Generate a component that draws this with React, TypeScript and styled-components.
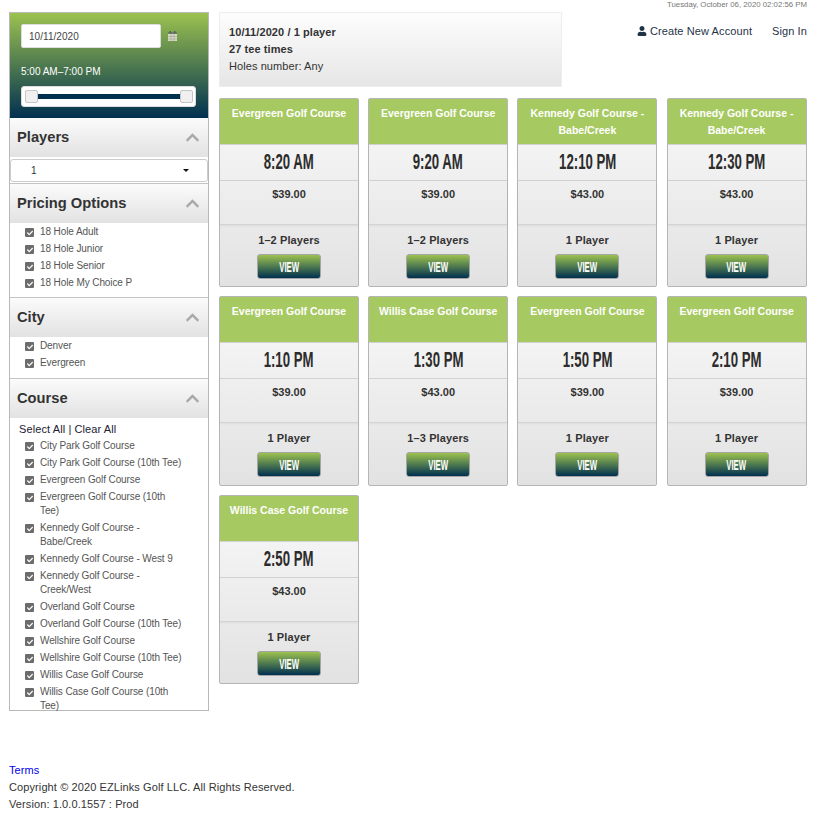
import * as React from 'react';
import styled, { createGlobalStyle } from 'styled-components';
import { FaCheck, FaChevronUp, FaUser } from 'react-icons/fa';

const GlobalStyle = createGlobalStyle`
  html, body {
    margin: 0;
    background: #fff;
    font-family: "Liberation Sans", Arial, sans-serif;
    font-size: 12px;
    color: #333;
  }
`;

const Page = styled.div`
  width: 826px;
  height: 837px;
  padding: 0 19px 0 9px;
  box-sizing: border-box;
  overflow: hidden;
`;

const Columns = styled.div`
  display: flex;
  align-items: flex-start;
  gap: 10px;
`;

const Sidebar = styled.aside`
  width: 200px;
  height: 699px;
  margin-top: 12px;
  box-sizing: border-box;
  border: 1px solid #b9b9b9;
`;

const SearchPanel = styled.div`
  height: 105px;
  padding: 11px 11px 0;
  box-sizing: border-box;
  background: linear-gradient(to bottom, #9cc24f 0%, #003050 100%);
`;

const DateRow = styled.div`
  display: flex;
  align-items: center;
  gap: 7px;
`;

const DateInput = styled.div`
  width: 140px;
  height: 24px;
  padding-left: 7px;
  box-sizing: border-box;
  background: #fff;
  border: 1px solid #ddd;
  border-radius: 2px;
  font-size: 10px;
  line-height: 24px;
  letter-spacing: 0.05px;
  color: #444;
`;

const TimeRange = styled.div`
  margin-top: 17px;
  font-size: 10px;
  line-height: 14px;
  color: #fff;
`;

const SliderBox = styled.div`
  position: relative;
  width: 175px;
  height: 21px;
  margin-top: 7px;
  background: #fff;
  border: 1px solid #ddd;
  border-radius: 3px;
  box-sizing: border-box;
`;

const SliderTrack = styled.div`
  position: absolute;
  left: 10px;
  right: 10px;
  top: 7px;
  height: 5px;
  background: #003050;
`;

const SliderHandle = styled.span<{ $end?: boolean }>`
  position: absolute;
  top: 3px;
  ${(p) => (p.$end ? 'right: 2px;' : 'left: 3px;')}
  width: 11px;
  height: 11px;
  background: #f0f0f0;
  border: 1px solid #c5c5c5;
  border-radius: 2px;
`;

const SectionHeader = styled.div`
  display: flex;
  align-items: center;
  justify-content: space-between;
  height: 39px;
  padding: 0 8px 1px 7px;
  box-sizing: border-box;
  background: linear-gradient(to bottom, #fbfbfb 0%, #e2e2e2 100%);
  font-size: 14.7px;
  font-weight: bold;
  color: #333;
  svg {
    color: #a9a9a9;
    font-size: 15px;
  }
`;

const Section = styled.section<{ $height: number }>`
  height: ${(p) => p.$height}px;
  box-sizing: border-box;
  border-bottom: 1px solid #c4c4c4;
  &:last-child {
    border-bottom: 0;
  }
`;

const PlayersSelect = styled.div`
  display: flex;
  align-items: center;
  justify-content: space-between;
  height: 23px;
  margin: 2px 0 0;
  padding: 0 18px 0 20px;
  box-sizing: border-box;
  background: #fff;
  border: 1px solid #ccc;
  border-radius: 3px;
  font-size: 10px;
`;

const Caret = styled.span`
  width: 0;
  height: 0;
  border: 3px solid transparent;
  border-top-color: #111;
  border-bottom: 0;
`;

const CheckList = styled.ul`
  list-style: none;
  margin: 0;
  padding: 0 24px 0 15px;
`;

const CheckItem = styled.li`
  display: flex;
  align-items: flex-start;
  gap: 6px;
  margin-top: 3px;
  font-size: 10px;
  line-height: 14px;
  letter-spacing: -0.1px;
  color: #555;
  &:first-child {
    margin-top: 2px;
  }
`;

const Box = styled.span`
  flex: none;
  display: flex;
  align-items: center;
  justify-content: center;
  width: 9px;
  height: 9px;
  margin-top: 3px;
  background: #6c6c6c;
  border-radius: 1px;
  color: #fff;
  font-size: 6px;
`;

const BulkLinks = styled.div`
  padding: 4px 0 0 9px;
  font-size: 11px;
  line-height: 15px;
  letter-spacing: 0.1px;
  color: #223;
`;

const Main = styled.main`
  flex: 1;
  min-width: 0;
`;

const TopRow = styled.div`
  display: flex;
  justify-content: space-between;
`;

const Summary = styled.div`
  width: 343px;
  height: 75px;
  margin-top: 12px;
  padding: 11px 9px;
  box-sizing: border-box;
  background: linear-gradient(to bottom, #fdfdfd 0%, #e6e6e6 100%);
  border: 1px solid #eee;
  font-size: 11px;
  line-height: 17px;
  letter-spacing: 0.08px;
`;

const SummaryStrong = styled.div`
  font-weight: bold;
`;

const Account = styled.div`
  text-align: right;
`;

const Stamp = styled.div`
  font-size: 7.8px;
  line-height: 10px;
  color: #777;
`;

const AccountLinks = styled.div`
  display: flex;
  justify-content: flex-end;
  align-items: center;
  gap: 20px;
  margin-top: 14px;
  font-size: 11px;
  line-height: 14px;
  letter-spacing: 0.1px;
  color: #1f3347;
`;

const AccountLink = styled.a`
  display: flex;
  align-items: center;
  gap: 3px;
  svg {
    font-size: 10px;
  }
`;

const Grid = styled.div`
  display: grid;
  grid-template-columns: repeat(4, 140px);
  column-gap: 9.2px;
  row-gap: 9px;
  margin-top: 10.8px;
`;

const Card = styled.article`
  height: 189.5px;
  box-sizing: border-box;
  display: flex;
  flex-direction: column;
  border: 1px solid #b5b5b5;
  border-radius: 2px;
  background: linear-gradient(to bottom, #f9f9f9 0%, #e2e2e2 100%);
`;

const CourseName = styled.div`
  height: 45px;
  padding: 6px 4px 0;
  box-sizing: border-box;
  background: #a7c961;
  color: #fff;
  font-size: 10.5px;
  font-weight: bold;
  line-height: 17px;
  text-align: center;
`;

const TeeTime = styled.div`
  height: 37px;
  padding-bottom: 1px;
  box-sizing: border-box;
  display: flex;
  align-items: center;
  justify-content: center;
  border-top: 1px solid #d2d2d2;
  border-bottom: 1px solid #d2d2d2;
  font-family: "Liberation Sans Narrow", "Liberation Sans", sans-serif;
  font-size: 22px;
  font-weight: bold;
  color: #2c2c2c;
`;

const TimeText = styled.span`
  display: inline-block;
  transform: scaleX(0.6);
`;

const Price = styled.div`
  height: 44px;
  padding-top: 5px;
  box-sizing: border-box;
  border-bottom: 1px solid #d4d4d4;
  box-shadow: 0 1px 2px rgba(0, 0, 0, 0.06);
  font-size: 11px;
  font-weight: bold;
  line-height: 16px;
  text-align: center;
`;

const Booking = styled.div`
  flex: 1;
  display: flex;
  flex-direction: column;
  align-items: center;
  padding-top: 7px;
`;

const PlayerCount = styled.div`
  font-size: 11px;
  font-weight: bold;
  line-height: 16px;
  letter-spacing: 0.1px;
`;

const ViewButton = styled.button`
  width: 64px;
  height: 25px;
  margin-top: 6px;
  padding: 0;
  border: 1px solid #a5a5a5;
  border-radius: 3px;
  background: linear-gradient(to bottom, #9cc24f 0%, #003050 100%);
  color: #fff;
  font-family: "Liberation Sans Narrow", "Liberation Sans", sans-serif;
  font-size: 15px;
  font-weight: bold;
`;

const ButtonLabel = styled.span`
  display: inline-block;
  transform: scaleX(0.52);
`;

const Footer = styled.footer`
  margin-top: 51px;
  font-size: 11px;
  line-height: 17px;
  letter-spacing: 0.1px;
  color: #333;
`;

const TermsLink = styled.a`
  color: #0000ee;
`;

const teeTimes = [
  { course: 'Evergreen Golf Course', time: '8:20 AM', price: '$39.00', players: '1–2 Players' },
  { course: 'Evergreen Golf Course', time: '9:20 AM', price: '$39.00', players: '1–2 Players' },
  { course: 'Kennedy Golf Course - Babe/Creek', time: '12:10 PM', price: '$43.00', players: '1 Player' },
  { course: 'Kennedy Golf Course - Babe/Creek', time: '12:30 PM', price: '$43.00', players: '1 Player' },
  { course: 'Evergreen Golf Course', time: '1:10 PM', price: '$39.00', players: '1 Player' },
  { course: 'Willis Case Golf Course', time: '1:30 PM', price: '$43.00', players: '1–3 Players' },
  { course: 'Evergreen Golf Course', time: '1:50 PM', price: '$39.00', players: '1 Player' },
  { course: 'Evergreen Golf Course', time: '2:10 PM', price: '$39.00', players: '1 Player' },
  { course: 'Willis Case Golf Course', time: '2:50 PM', price: '$43.00', players: '1 Player' },
];

const pricing = ['18 Hole Adult', '18 Hole Junior', '18 Hole Senior', '18 Hole My Choice P'];
const cities = ['Denver', 'Evergreen'];
const courses = [
  'City Park Golf Course',
  'City Park Golf Course (10th Tee)',
  'Evergreen Golf Course',
  'Evergreen Golf Course (10th Tee)',
  'Kennedy Golf Course - Babe/Creek',
  'Kennedy Golf Course - West 9',
  'Kennedy Golf Course - Creek/West',
  'Overland Golf Course',
  'Overland Golf Course (10th Tee)',
  'Wellshire Golf Course',
  'Wellshire Golf Course (10th Tee)',
  'Willis Case Golf Course',
  'Willis Case Golf Course (10th Tee)',
];

const CalendarIcon = () => (
  <svg width="9" height="10" viewBox="0 0 9 10">
    <rect x="0" y="1" width="9" height="9" fill="#d9d9c8" />
    <rect x="0" y="1" width="9" height="2" fill="#6f7f66" />
    <rect x="1.5" y="0" width="1.5" height="2" fill="#55634f" />
    <rect x="6" y="0" width="1.5" height="2" fill="#55634f" />
    <path d="M3 3v7M6 3v7M0 5.5h9M0 8h9" stroke="#9aa58c" strokeWidth="0.6" />
  </svg>
);

const Checks = ({ items }: { items: string[] }) => (
  <CheckList>
    {items.map((item) => (
      <CheckItem key={item}>
        <Box>
          <FaCheck />
        </Box>
        {item}
      </CheckItem>
    ))}
  </CheckList>
);

const Header = ({ title }: { title: string }) => (
  <SectionHeader>
    {title}
    <FaChevronUp />
  </SectionHeader>
);

export default function App() {
  return (
    <Page>
      <GlobalStyle />
      <Columns>
        <Sidebar>
          <SearchPanel>
            <DateRow>
              <DateInput>10/11/2020</DateInput>
              <CalendarIcon />
            </DateRow>
            <TimeRange>5:00 AM–7:00 PM</TimeRange>
            <SliderBox>
              <SliderTrack />
              <SliderHandle />
              <SliderHandle $end />
            </SliderBox>
          </SearchPanel>
          <Section $height={66}>
            <Header title="Players" />
            <PlayersSelect>
              1
              <Caret />
            </PlayersSelect>
          </Section>
          <Section $height={114}>
            <Header title="Pricing Options" />
            <Checks items={pricing} />
          </Section>
          <Section $height={81}>
            <Header title="City" />
            <Checks items={cities} />
          </Section>
          <Section $height={331}>
            <Header title="Course" />
            <BulkLinks>Select All | Clear All</BulkLinks>
            <Checks items={courses} />
          </Section>
        </Sidebar>
        <Main>
          <TopRow>
            <Summary>
              <SummaryStrong>10/11/2020 / 1 player</SummaryStrong>
              <SummaryStrong>27 tee times</SummaryStrong>
              <div>Holes number: Any</div>
            </Summary>
            <Account>
              <Stamp>Tuesday, October 06, 2020 02:02:56 PM</Stamp>
              <AccountLinks>
                <AccountLink>
                  <FaUser />
                  Create New Account
                </AccountLink>
                <AccountLink>Sign In</AccountLink>
              </AccountLinks>
            </Account>
          </TopRow>
          <Grid>
            {teeTimes.map((tee) => (
              <Card key={tee.time}>
                <CourseName>{tee.course}</CourseName>
                <TeeTime>
                  <TimeText>{tee.time}</TimeText>
                </TeeTime>
                <Price>{tee.price}</Price>
                <Booking>
                  <PlayerCount>{tee.players}</PlayerCount>
                  <ViewButton>
                    <ButtonLabel>VIEW</ButtonLabel>
                  </ViewButton>
                </Booking>
              </Card>
            ))}
          </Grid>
        </Main>
      </Columns>
      <Footer>
        <TermsLink>Terms</TermsLink>
        <div>Copyright © 2020 EZLinks Golf LLC. All Rights Reserved.</div>
        <div>Version: 1.0.0.1557 : Prod</div>
      </Footer>
    </Page>
  );
}
